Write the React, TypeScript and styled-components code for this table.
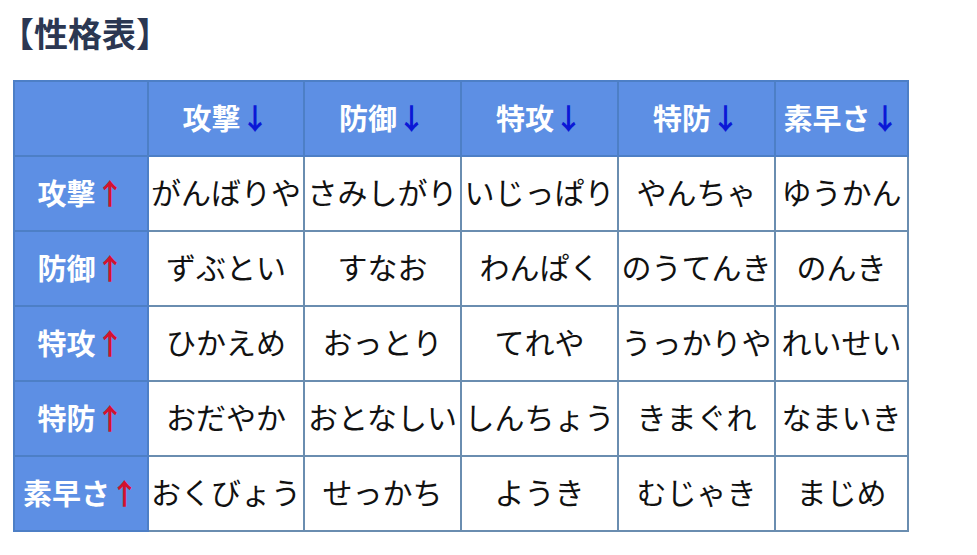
import React from "react";
import styled, { createGlobalStyle } from "styled-components";

const Global = createGlobalStyle`
  html, body { margin: 0; padding: 0; background: #ffffff; }
  body { font-family: "Noto Sans CJK JP", "Noto Sans", sans-serif; }
`;

const Page = styled.div`
  width: 977px;
  height: 555px;
  box-sizing: border-box;
  padding: 12px 0 0 13px;
  background: #ffffff;
`;

const Title = styled.h2`
  margin: 0 0 0 -13px;
  font-size: 34px;
  line-height: 42px;
  font-weight: 700;
  color: #2b3752;
  letter-spacing: 0;
`;

const Table = styled.table`
  margin-top: 26px;
  border-collapse: collapse;
  table-layout: fixed;
  width: 894px;
  border: 2px solid #6a8db0;
`;

const Row = styled.tr`
  height: 75px;
`;

const HeadCell = styled.th`
  background: #5d8fe4;
  color: #ffffff;
  font-weight: 700;
  font-size: 29px;
  line-height: 1;
  text-align: center;
  vertical-align: middle;
  padding: 0 0 3px;
  border: 2px solid #4d7fc6;
  white-space: nowrap;
`;

const BodyCell = styled.td`
  background: #ffffff;
  color: #111111;
  font-weight: 400;
  font-size: 30px;
  line-height: 1;
  text-align: center;
  vertical-align: middle;
  padding: 0 0 5px;
  border: 2px solid #6a8db0;
  white-space: nowrap;
  overflow: hidden;
`;

const Arrow = styled.span<{ $up?: boolean }>`
  color: ${(p) => (p.$up ? "#d3122e" : "#0b18d6")};
  font-weight: 700;
`;

const stats = ["攻撃", "防御", "特攻", "特防", "素早さ"];
const widths = [134, 156, 157, 157, 157, 133];

const natures = [
  ["がんばりや", "さみしがり", "いじっぱり", "やんちゃ", "ゆうかん"],
  ["ずぶとい", "すなお", "わんぱく", "のうてんき", "のんき"],
  ["ひかえめ", "おっとり", "てれや", "うっかりや", "れいせい"],
  ["おだやか", "おとなしい", "しんちょう", "きまぐれ", "なまいき"],
  ["おくびょう", "せっかち", "ようき", "むじゃき", "まじめ"],
];

export default function App() {
  return (
    <>
      <Global />
      <Page>
        <Title>【性格表】</Title>
        <Table>
          <colgroup>
            {widths.map((w, i) => (
              <col key={i} style={{ width: w }} />
            ))}
          </colgroup>
          <thead>
            <Row>
              <HeadCell />
              {stats.map((s) => (
                <HeadCell key={s}>
                  {s}
                  <Arrow>↓</Arrow>
                </HeadCell>
              ))}
            </Row>
          </thead>
          <tbody>
            {natures.map((row, r) => (
              <Row key={r}>
                <HeadCell>
                  {stats[r]}
                  <Arrow $up>↑</Arrow>
                </HeadCell>
                {row.map((n) => (
                  <BodyCell key={n}>{n}</BodyCell>
                ))}
              </Row>
            ))}
          </tbody>
        </Table>
      </Page>
    </>
  );
}
